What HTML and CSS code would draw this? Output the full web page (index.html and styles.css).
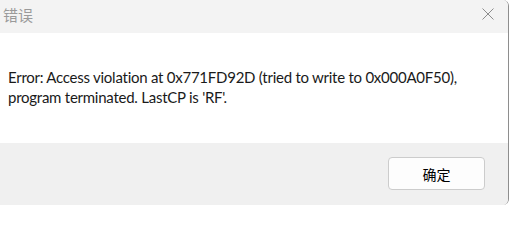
FILE: index.html
```html
<!DOCTYPE html>
<html lang="zh">
<head>
<meta charset="utf-8">
<title>错误</title>
<link rel="stylesheet" href="styles.css">
</head>
<body>
<div class="dialog">
  <div class="titlebar">
    <span class="title">错误</span>
    <svg class="close" width="12" height="12" viewBox="0 0 12 12" aria-hidden="true">
      <path d="M0.5 0.5 L11.5 11.5 M11.5 0.5 L0.5 11.5" stroke="#8c8c8c" stroke-width="1" fill="none"/>
    </svg>
  </div>
  <div class="content">
    <p class="message">Error: Access violation at 0x771FD92D (tried to write to 0x000A0F50),<br>program terminated. LastCP is 'RF'.</p>
  </div>
  <div class="footer">
    <button class="ok">确定</button>
  </div>
</div>
</body>
</html>
```

FILE: styles.css
```css
html, body {
  margin: 0;
  padding: 0;
  background: #ffffff;
  overflow: hidden;
}
.dialog {
  width: 508px;
  height: 205px;
  border-right: 1px solid #8e8e8e;
  border-top-right-radius: 6px;
  border-bottom-right-radius: 6px;
  overflow: hidden;
}
.titlebar {
  height: 33px;
  background: #f3f3f3;
  display: flex;
  align-items: center;
  justify-content: space-between;
  padding: 0 14px 0 3px;
  box-sizing: border-box;
}
.title {
  font-family: "Noto Sans CJK SC", sans-serif;
  font-size: 15px;
  color: #9a9a9a;
  line-height: 15px;
  margin-top: -5px;
}
.close {
  display: block;
  margin-top: -5px;
}
.content {
  height: 110px;
  background: #ffffff;
  padding: 34px 0 0 8px;
  box-sizing: border-box;
}
.message {
  margin: 0;
  font-family: "Lato", "Noto Sans", sans-serif;
  font-size: 15px;
  letter-spacing: -0.25px;
  line-height: 20px;
  color: #1a1a1a;
}
.footer {
  height: 62px;
  background: #f0f0f0;
  display: flex;
  justify-content: flex-end;
  align-items: flex-start;
  padding: 14px 23px 0 0;
  box-sizing: border-box;
}
.ok {
  width: 97px;
  height: 33px;
  border: 1px solid #cccccc;
  border-radius: 4px;
  background: #fdfdfd;
  font-family: "Noto Sans CJK SC", sans-serif;
  font-size: 14px;
  color: #000000;
  padding: 0;
}
```
